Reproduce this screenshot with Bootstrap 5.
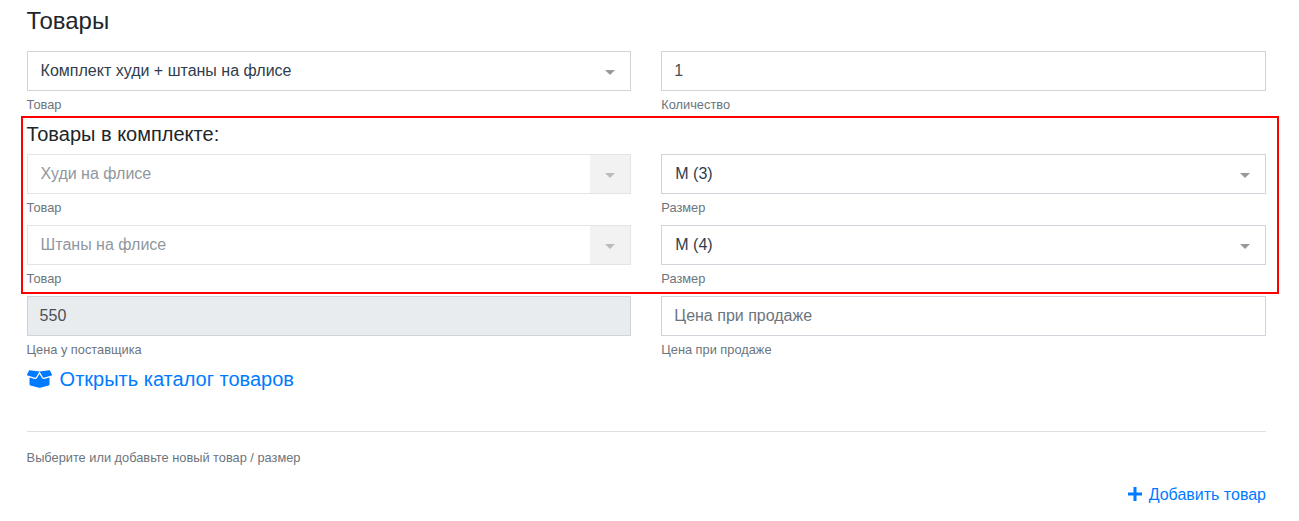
<!DOCTYPE html>
<html lang="ru">
<head>
<meta charset="utf-8">
<title>Товары</title>
<link rel="stylesheet" href="https://cdn.jsdelivr.net/npm/bootstrap@5.3.0/dist/css/bootstrap.min.css">
<style>
body { font-family: "Liberation Sans", Arial, sans-serif; background: #fff; color: #212529; }
.page-wrap { padding: 0 33px 0 26.6px; }
.page-title { font-size: 24px; line-height: 29px; font-weight: 400; margin: 6px 0 16px; }
.goods-row { --bs-gutter-x: 30px; --bs-gutter-y: 0; }
.field-group { margin-bottom: 8px; }
.top-group { margin-bottom: 2px; }
.field-ctl { height: 40px; border-radius: 0; border: 1px solid #ced4da; padding: 6px 12px; font-size: 16px; line-height: 24px; color: #495057; box-shadow: none; }
.field-ctl::placeholder { color: #6c757d; opacity: 1; }
.field-ctl:disabled, .field-ctl[readonly] { background-color: #e9ecef; opacity: 1; }
.pick-ctl { padding-left: 13px; color: #2f3d4c; background-position: right 15px top 18px; background-size: 10px 5px; background-image: url("data:image/svg+xml,%3Csvg xmlns='http://www.w3.org/2000/svg' viewBox='0 0 10 5'%3E%3Cpath fill='%23999' d='M0 0h10L5 5z'/%3E%3C/svg%3E"); }
.pick-ctl:disabled { color: #8f979e; border-color: #e4e4e4; background-color: #fff;
  background-image: url("data:image/svg+xml,%3Csvg xmlns='http://www.w3.org/2000/svg' viewBox='0 0 10 5'%3E%3Cpath fill='%23bbb' d='M0 0h10L5 5z'/%3E%3C/svg%3E"), linear-gradient(#f2f2f2, #f2f2f2);
  background-position: right 15px top 18px, right 0 center; background-size: 10px 5px, 40px 100%; background-repeat: no-repeat; padding-right: 40px; }
.field-note { display: block; margin-top: 4px; font-size: 12.8px; line-height: 19px; color: #6c757d; }
.kit-box { border: 2px solid #f00; margin: 0 -13px 2px -6px; padding: 0 11px 0 4px; height: 178px; }
.kit-title { font-size: 20px; line-height: 24px; font-weight: 400; margin: 4px 0 8px; }
.catalog-link { font-size: 20px; line-height: 24px; color: #007bff; text-decoration: none; }
.catalog-link svg { width: 25px; height: 20px; fill: #007bff; margin-right: 8px; vertical-align: -3px; }
.catalog-line { margin-top: 8px; }
.page-rule { margin: 38px 0 0; border: 0; border-top: 1px solid #dfdfdf; opacity: 1; }
.hint-line { margin-top: 16px; font-size: 12.8px; line-height: 19px; color: #6c757d; }
.add-line { margin-top: 16px; text-align: right; line-height: 24px; }
.add-link { font-size: 16px; color: #007bff; text-decoration: none; }
.add-link svg { width: 14px; height: 14px; fill: #007bff; margin-right: 7px; vertical-align: -1px; }
</style>
</head>
<body>
<div class="page-wrap">
  <h4 class="page-title">Товары</h4>
  <div class="row goods-row">
    <div class="col-6">
      <div class="field-group top-group">
        <select class="form-select field-ctl pick-ctl"><option>Комплект худи + штаны на флисе</option></select>
        <small class="field-note">Товар</small>
      </div>
    </div>
    <div class="col-6">
      <div class="field-group top-group">
        <input class="form-control field-ctl" value="1">
        <small class="field-note">Количество</small>
      </div>
    </div>
  </div>
  <div class="kit-box">
    <h5 class="kit-title">Товары в комплекте:</h5>
    <div class="row goods-row">
      <div class="col-6">
        <div class="field-group">
          <select class="form-select field-ctl pick-ctl" disabled><option>Худи на флисе</option></select>
          <small class="field-note">Товар</small>
        </div>
      </div>
      <div class="col-6">
        <div class="field-group">
          <select class="form-select field-ctl pick-ctl"><option>M (3)</option></select>
          <small class="field-note">Размер</small>
        </div>
      </div>
      <div class="col-6">
        <div class="field-group">
          <select class="form-select field-ctl pick-ctl" disabled><option>Штаны на флисе</option></select>
          <small class="field-note">Товар</small>
        </div>
      </div>
      <div class="col-6">
        <div class="field-group">
          <select class="form-select field-ctl pick-ctl"><option>M (4)</option></select>
          <small class="field-note">Размер</small>
        </div>
      </div>
    </div>
  </div>
  <div class="row goods-row">
    <div class="col-6">
      <div class="field-group mb-0">
        <input class="form-control field-ctl" value="550" readonly>
        <small class="field-note">Цена у поставщика</small>
      </div>
    </div>
    <div class="col-6">
      <div class="field-group mb-0">
        <input class="form-control field-ctl" placeholder="Цена при продаже">
        <small class="field-note">Цена при продаже</small>
      </div>
    </div>
  </div>
  <div class="catalog-line">
    <a class="catalog-link" href="#"><svg viewBox="0 0 640 512" aria-hidden="true"><path d="M425.7 256c-16.9 0-32.8-9-41.4-23.4L320 126l-64.2 106.6c-8.7 14.5-24.6 23.5-41.5 23.5-4.5 0-9-.6-13.3-1.9L64 215v178c0 14.7 10 27.5 24.2 31l216.2 54.1c10.2 2.5 20.9 2.5 31 0L551.8 424c14.2-3.6 24.2-16.4 24.2-31V215l-137 39.1c-4.3 1.3-8.8 1.9-13.3 1.9zm212.6-112.2L586.8 41c-3.1-6.2-9.8-9.8-16.7-8.9L320 64l91.7 152.1c3.8 6.3 11.4 9.3 18.5 7.3l197.9-56.5c9.9-2.9 14.7-13.9 10.2-23.1zM53.2 41L1.7 143.8c-4.6 9.2.3 20.2 10.1 23l197.9 56.5c7.1 2 14.7-1 18.5-7.3L320 64 69.8 32.1c-6.9-.8-13.5 2.7-16.6 8.9z"/></svg>Открыть каталог товаров</a>
  </div>
  <hr class="page-rule">
  <div class="hint-line">Выберите или добавьте новый товар / размер</div>
  <div class="add-line">
    <a class="add-link" href="#"><svg viewBox="0 0 14 14" aria-hidden="true"><path d="M5.5 0h3v5.5H14v3H8.5V14h-3V8.5H0v-3h5.5z"/></svg>Добавить товар</a>
  </div>
</div>
</body>
</html>
